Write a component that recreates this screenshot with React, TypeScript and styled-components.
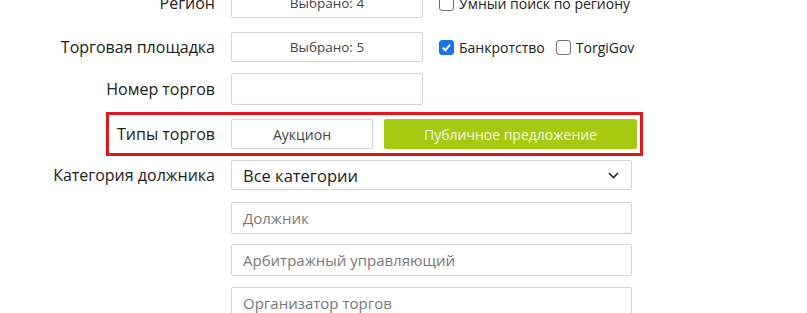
import styled, { createGlobalStyle } from "styled-components";

const GlobalStyle = createGlobalStyle`
  html, body {
    margin: 0;
    padding: 0;
    background: #fff;
    font-family: "Open Sans", "Liberation Sans", sans-serif;
    color: #222;
    overflow: hidden;
  }
`;

const Form = styled.div`
  display: flex;
  flex-direction: column;
  gap: 12px;
  margin-top: -12px;
  width: 807px;
`;

const Row = styled.div<{ $highlight?: boolean; $gap?: number }>`
  position: relative;
  display: grid;
  grid-template-columns: 215px auto 1fr;
  column-gap: 16px;
  align-items: center;
  margin-top: ${(p) => p.$gap ?? 0}px;

  ${(p) =>
    p.$highlight &&
    `
    &::after {
      content: "";
      position: absolute;
      left: 106px;
      width: 531px;
      top: -7px;
      bottom: -7px;
      border: 3px solid #e2141c;
      pointer-events: none;
    }
  `}
`;

const Label = styled.label`
  text-align: right;
  font-size: 16px;
  color: #222;
  white-space: nowrap;
`;

const PickBox = styled.div<{ $h?: number }>`
  box-sizing: border-box;
  width: 192px;
  height: ${(p) => p.$h ?? 30}px;
  border: 1px solid #d4d4d4;
  border-radius: 2px;
  background: #fff;
  display: flex;
  align-items: center;
  justify-content: center;
  font-size: 13.5px;
  color: #444;
`;

const Checks = styled.div`
  display: flex;
  align-items: center;
  gap: 11px;
`;

const Check = styled.label`
  display: flex;
  align-items: center;
  gap: 5px;
  font-size: 14px;
  color: #222;
`;

const Box = styled.span<{ $on?: boolean }>`
  box-sizing: border-box;
  width: 15px;
  height: 15px;
  border-radius: 3px;
  border: 1px solid ${(p) => (p.$on ? "#1a73e8" : "#6f6f6f")};
  background: ${(p) => (p.$on ? "#1a73e8" : "#fff")};
  display: flex;
  align-items: center;
  justify-content: center;
`;

const Types = styled.div`
  display: flex;
  gap: 11px;
  grid-column: 2 / 4;
`;

const TypeButton = styled.button<{ $active?: boolean; $w: number }>`
  box-sizing: border-box;
  width: ${(p) => p.$w}px;
  height: 30px;
  border-radius: 2px;
  border: 1px solid ${(p) => (p.$active ? "#a6ca0f" : "#d4d4d4")};
  background: ${(p) => (p.$active ? "#a6ca0f" : "#fff")};
  color: ${(p) => (p.$active ? "#f4f8e4" : "#444")};
  font-family: "Open Sans", "Liberation Sans", sans-serif;
  font-size: 14px;
  padding: 0;
`;

const Wide = styled.div<{ $h?: number; $placeholder?: boolean }>`
  grid-column: 2 / 4;
  box-sizing: border-box;
  width: 401px;
  height: ${(p) => p.$h ?? 32}px;
  border: 1px solid #d4d4d4;
  border-radius: 2px;
  background: #fff;
  display: flex;
  align-items: center;
  justify-content: space-between;
  padding: 0 12px 0 11px;
  font-size: ${(p) => (p.$placeholder ? 15 : 16.5)}px;
  color: ${(p) => (p.$placeholder ? "#787878" : "#222")};
`;

const Tick = () => (
  <svg width="11" height="11" viewBox="0 0 11 11">
    <path d="M1.8 5.8 L4.3 8.3 L9.2 2.6" fill="none" stroke="#fff" strokeWidth="2" />
  </svg>
);

const Chevron = () => (
  <svg width="11" height="7" viewBox="0 0 11 7">
    <path d="M1 1 L5.5 5.5 L10 1" fill="none" stroke="#222" strokeWidth="1.6" />
  </svg>
);

export default function App() {
  return (
    <>
      <GlobalStyle />
      <Form>
        <Row>
          <Label>Регион</Label>
          <PickBox>Выбрано: 4</PickBox>
          <Checks>
            <Check>
              <Box />
              Умный поиск по региону
            </Check>
          </Checks>
        </Row>
        <Row $gap={2}>
          <Label>Торговая площадка</Label>
          <PickBox>Выбрано: 5</PickBox>
          <Checks>
            <Check>
              <Box $on>
                <Tick />
              </Box>
              Банкротство
            </Check>
            <Check>
              <Box />
              TorgiGov
            </Check>
          </Checks>
        </Row>
        <Row $gap={-1}>
          <Label>Номер торгов</Label>
          <PickBox $h={32} />
        </Row>
        <Row $highlight $gap={2}>
          <Label>Типы торгов</Label>
          <Types>
            <TypeButton $w={142}>Аукцион</TypeButton>
            <TypeButton $w={253} $active>
              Публичное предложение
            </TypeButton>
          </Types>
        </Row>
        <Row $gap={-1}>
          <Label>Категория должника</Label>
          <Wide $h={30}>
            Все категории
            <Chevron />
          </Wide>
        </Row>
        <Row>
          <span />
          <Wide $placeholder>Должник</Wide>
        </Row>
        <Row $gap={-2}>
          <span />
          <Wide $placeholder>Арбитражный управляющий</Wide>
        </Row>
        <Row $gap={-1}>
          <span />
          <Wide $placeholder>Организатор торгов</Wide>
        </Row>
      </Form>
    </>
  );
}
